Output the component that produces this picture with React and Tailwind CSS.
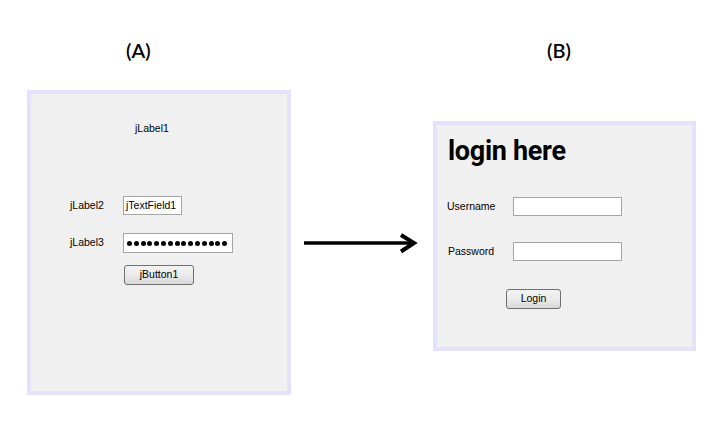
import React from 'react';

const label = "text-[10.5px] text-black font-['Liberation_Sans',Arial,sans-serif]";

const SwingButton = ({ children, className }) => (
    <div
        className={`flex items-center justify-center rounded-[3px] border border-[#707070] bg-gradient-to-b from-[#f3f3f3] via-[#ebebeb] to-[#d8d8d8] ${label} ${className}`}
    >
        {children}
    </div>
);

const PanelA = () => (
    <div className="w-[264px] h-[305px] mt-[28px] border-4 border-[#e4e2fb] bg-[#f0f0f0] flex flex-col">
        {/* title label */}
        <div className={`mt-[27px] pl-[104px] h-[14px] leading-[14px] ${label}`}>jLabel1</div>

        {/* text field row */}
        <div className="mt-[61px] pl-[39px] flex items-center">
            <span className={`w-[53px] ${label}`}>jLabel2</span>
            <div className={`w-[59px] h-[19px] border border-[#a5a5a5] bg-white pl-[2px] leading-[17px] ${label}`}>
                jTextField1
            </div>
        </div>

        {/* password row */}
        <div className="mt-[18px] pl-[39px] flex items-center">
            <span className={`w-[53px] ${label}`}>jLabel3</span>
            <div className="w-[110px] h-[20px] border border-[#a5a5a5] bg-white pl-[3px] flex items-center gap-[1.8px]">
                {Array.from({ length: 15 }).map((_, i) => (
                    <span key={i} className="w-[5px] h-[5px] rounded-full bg-black" />
                ))}
            </div>
        </div>

        <div className="mt-[12px] pl-[93px]">
            <SwingButton className="w-[70px] h-[20px]">jButton1</SwingButton>
        </div>
    </div>
);

const PanelB = () => (
    <div className="w-[263px] h-[230px] mt-[59px] border-4 border-[#e4e2fb] bg-[#f0f0f0] flex flex-col">
        <h1 className="mt-[10px] pl-[11px] h-[32px] leading-[32px] text-[27px] font-bold text-black font-['Roboto',sans-serif] tracking-[-0.3px]">
            login here
        </h1>

        <div className="mt-[30px] pl-[10px] flex items-center">
            <span className={`w-[66px] ${label}`}>Username</span>
            <div className="w-[109px] h-[19px] border border-[#a5a5a5] bg-white" />
        </div>

        <div className="mt-[26px] pl-[11px] flex items-center">
            <span className={`w-[65px] ${label}`}>Password</span>
            <div className="w-[109px] h-[19px] border border-[#a5a5a5] bg-white" />
        </div>

        <div className="mt-[28px] pl-[69px]">
            <SwingButton className="w-[55px] h-[20px]">Login</SwingButton>
        </div>
    </div>
);

const Heading = ({ children, className }) => (
    <div className={`mt-[38px] h-[24px] leading-[24px] text-[20px] font-semibold text-black font-['Lato','Open_Sans',sans-serif] ${className}`}>
        {children}
    </div>
);

export default function App() {
    return (
        <div className="w-[710px] h-[428px] bg-white flex items-start pl-[27px]">
            {/* (A) NetBeans design view */}
            <div className="flex flex-col w-[264px]">
                <Heading className="pl-[99px]">(A)</Heading>
                <PanelA />
            </div>

            {/* arrow */}
            <svg width="116" height="22" viewBox="0 0 116 22" className="mt-[233px] ml-[11px] shrink-0">
                <line x1="2" y1="10" x2="110" y2="10" stroke="#000" strokeWidth="3.5" />
                <polyline points="99,2 112,10 99,18.5" fill="none" stroke="#000" strokeWidth="4" strokeLinejoin="miter" />
            </svg>

            {/* (B) running form */}
            <div className="flex flex-col w-[263px] ml-[15px]">
                <Heading className="pl-[114px]">(B)</Heading>
                <PanelB />
            </div>
        </div>
    );
}
